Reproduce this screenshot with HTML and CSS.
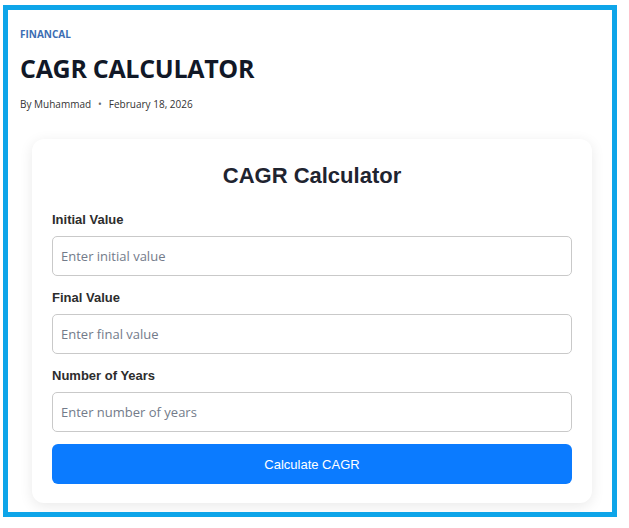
FILE: index.html
```html
<!DOCTYPE html>
<html lang="en">
<head>
<meta charset="utf-8">
<title>CAGR Calculator</title>
<link rel="stylesheet" href="styles.css">
</head>
<body>
<div class="frame">
  <header class="post-header">
    <a class="category" href="#">FINANCAL</a>
    <h1 class="post-title">CAGR CALCULATOR</h1>
    <div class="byline"><span>By Muhammad</span><span class="dot">•</span><span>February 18, 2026</span></div>
  </header>
  <div class="card">
    <h2 class="card-title">CAGR Calculator</h2>
    <div class="field">
      <label class="field-label" for="iv">Initial Value</label>
      <input class="field-input" id="iv" type="number" placeholder="Enter initial value">
    </div>
    <div class="field">
      <label class="field-label" for="fv">Final Value</label>
      <input class="field-input" id="fv" type="number" placeholder="Enter final value">
    </div>
    <div class="field field-last">
      <label class="field-label" for="ny">Number of Years</label>
      <input class="field-input" id="ny" type="number" placeholder="Enter number of years">
    </div>
    <button class="calc-btn" type="button">Calculate CAGR</button>
  </div>
</div>
</body>
</html>
```
FILE: styles.css
```css
* { box-sizing: border-box; }
html, body { margin: 0; padding: 0; background: #fff; }
body { font-family: "Open Sans", "Noto Sans", sans-serif; color: #1f2933; }

.frame {
  margin: 5px 0 0 3px;
  width: 614px;
  height: 512px;
  border: 5px solid #0ea5e9;
  padding: 17px 0 0 12px;
  overflow: hidden;
}

.post-header { display: flex; flex-direction: column; }
.category {
  font-size: 10px;
  font-weight: 700;
  color: #3b6db3;
  text-decoration: none;
  line-height: 14px;
}
.post-title {
  margin: 10px 0 0;
  font-size: 25px;
  line-height: 34px;
  font-weight: 700;
  color: #111827;
  letter-spacing: -0.3px;
}
.byline {
  margin-top: 11px;
  font-size: 10px;
  line-height: 16px;
  color: #333;
  display: flex;
  gap: 7px;
}
.byline .dot { color: #666; }

.card {
  margin: 27px 0 0 12px;
  width: 560px;
  background: #fff;
  border-radius: 12px;
  box-shadow: 0 3px 14px rgba(0,0,0,0.09);
  padding: 24px 20px 19px;
}
.card-title {
  margin: 0 0 24px;
  text-align: center;
  font-family: "Liberation Sans", Arial, sans-serif;
  font-size: 22px;
  line-height: 25px;
  font-weight: 700;
  color: #1f2430;
}
.field { display: flex; flex-direction: column; margin-bottom: 14px; }
.field-last { margin-bottom: 12px; }
.field-label {
  font-family: "Liberation Sans", Arial, sans-serif;
  font-size: 13px;
  line-height: 16px;
  font-weight: 700;
  color: #2d2d2d;
  margin-bottom: 8px;
}
.field-input {
  height: 40px;
  border: 1px solid #c9c9c9;
  border-radius: 5px;
  padding: 0 8px;
  font-family: "Open Sans", "Noto Sans", sans-serif;
  font-size: 13px;
  color: #333;
  background: #fff;
  outline: none;
}
.field-input::placeholder { color: #737b8a; }
.calc-btn {
  display: block;
  width: 100%;
  height: 40px;
  border: none;
  border-radius: 6px;
  background: #0b7bff;
  color: #fff;
  font-family: "Liberation Sans", Arial, sans-serif;
  font-size: 13px;
}
```
